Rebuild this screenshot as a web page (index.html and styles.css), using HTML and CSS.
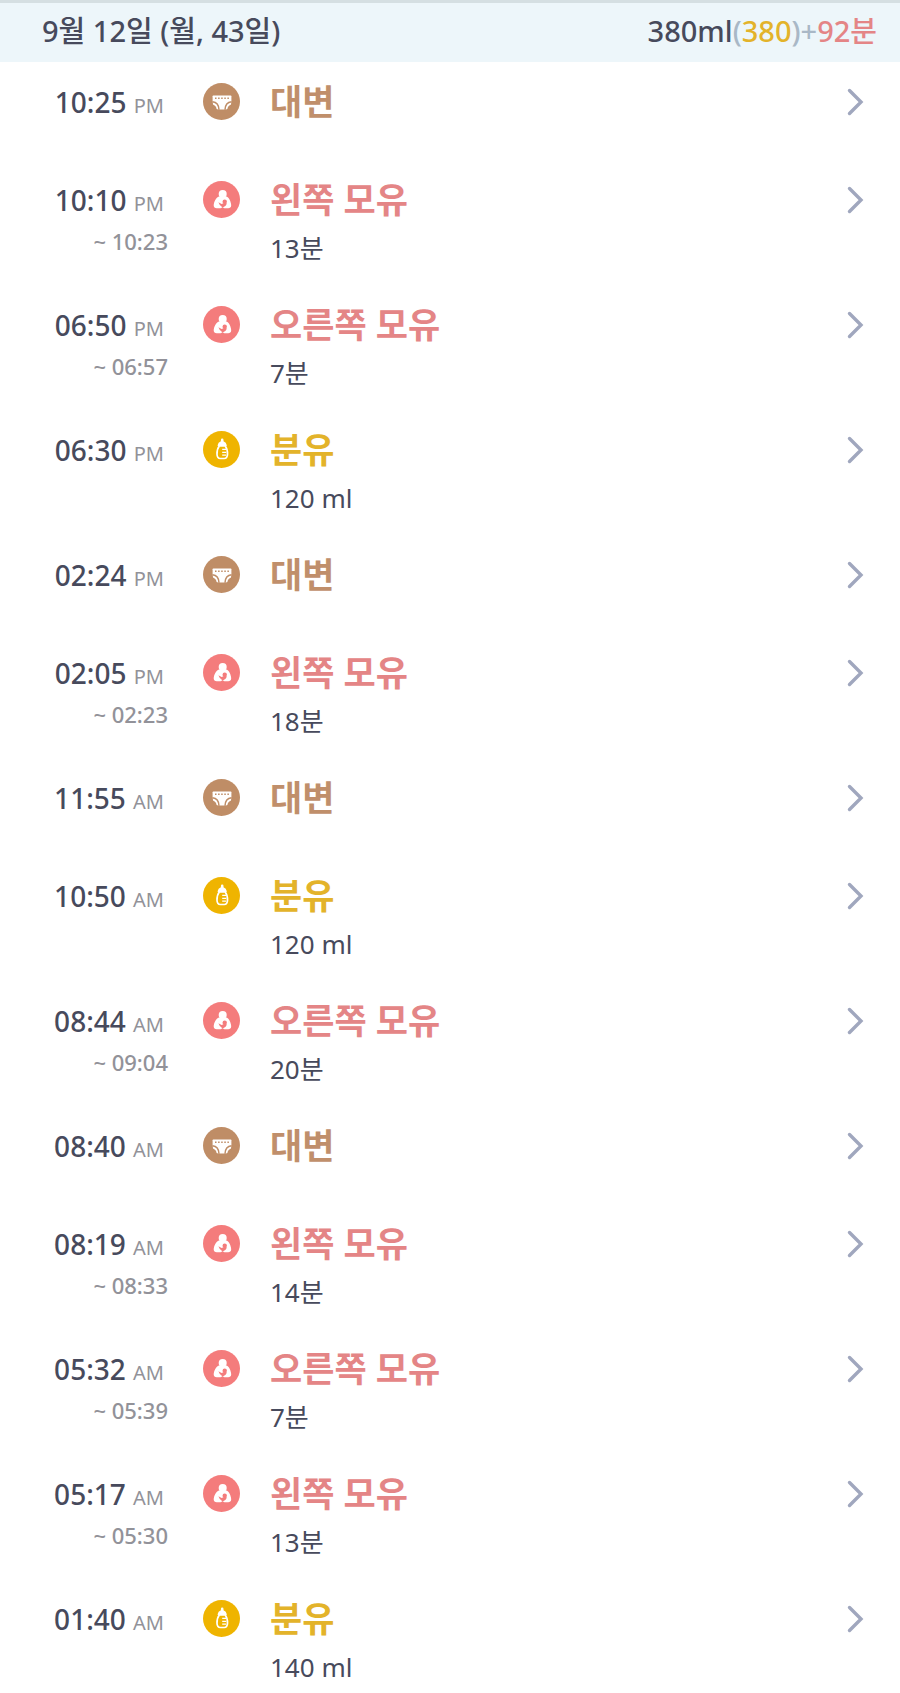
FILE: index.html
```html
<!DOCTYPE html>
<html lang="ko">
<head>
<meta charset="utf-8">
<meta name="viewport" content="width=device-width, initial-scale=1">
<title>9월 12일</title>
<link rel="stylesheet" href="styles.css">
</head>
<body>
<svg class="sprite" aria-hidden="true">
  <symbol id="diaper" viewBox="0 0 37 37">
    <circle cx="18.5" cy="18.5" r="18.5" fill="#bf8d66"/>
    <path d="M9.600 13.200q0-.7.7-.7h17.400q.7 0 .7.7v4.300q-.1 3-.8 5.500c-.8 2.400-3 3.500-5.600 3.500h-6c-2.600 0-4.800-1.100-5.600-3.500q-.7-2.500-.8-5.500z" fill="#fff"/>
    <path d="M9.500 18.700c4 .4 6.300 3.200 6.500 8M28.500 18.700c-4 .4-6.300 3.200-6.500 8" fill="none" stroke="#bf8d66" stroke-width="1.500"/>
    <path d="M9.500 22.500c1.800.4 3 2 3.300 4.500M28.500 22.500c-1.800.4-3 2-3.300 4.500" fill="none" stroke="#bf8d66" stroke-width="2"/>
    <path d="M12 15.200h14.500" stroke="#bf8d66" stroke-width="1.400" stroke-dasharray="1.500 1.600"/>
  </symbol>
  <symbol id="nursing" viewBox="0 0 37 37">
    <circle cx="18.500" cy="18.500" r="18.500" fill="#f47c7c"/>
    <circle cx="19.700" cy="13" r="4" fill="#fff"/>
    <path d="M16 15.500h7.500c2.600 1 4.600 5.400 4.700 8.800 0 2.200-1.400 3-3 3h-3.800l-1.900-1-1.900 1h-3.900c-1.800 0-3.100-.9-3-3 .2-3.500 2.400-7.800 5.300-8.800z" fill="#fff"/>
    <circle cx="21.700" cy="20.800" r="2.200" fill="#f47c7c"/>
    <path d="M15.400 21.200l3.200 1.700 2.600-.9 2.500.3c-.1 2-1.400 3-2.700 3.400l-1.500 1-1.200-1.400-1.500-1.400z" fill="#f47c7c"/>
  </symbol>
  <symbol id="bottle" viewBox="0 0 37 37">
    <circle cx="18.500" cy="18.500" r="18.500" fill="#efb400"/>
    <path d="M19.200 7.500q1.300 0 1.300 1.400v1.300q2.900 1.200 3.200 3.800v1h-9v-1q.3-2.600 3.200-3.800V8.900q0-1.400 1.300-1.400z" fill="#fff"/>
    <path d="M16.300 15h5.900c1.800 2.200 2.400 4.700 2.300 8.300-.1 3-1.300 4.200-3.300 4.200h-3.900c-2 0-3.200-1.200-3.300-4.200-.1-3.600.5-6.100 2.300-8.300z" fill="#efb400" stroke="#fff" stroke-width="1.700"/>
    <path d="M19.200 18.300h4M19.200 21.300h4M19.200 24.200h4" stroke="#fff" stroke-width="1.300"/>
  </symbol>
  <symbol id="chevron" viewBox="0 0 17 28">
    <path d="M2.500 2.500L14 14 2.500 25.500" fill="none" stroke="#a0a7be" stroke-width="3.400" stroke-linecap="round" stroke-linejoin="miter"/>
  </symbol>
</svg>

<header class="day">
  <h1 class="day-title">9월 12일 (월, 43일)</h1>
  <p class="day-total">380ml<span class="muted">(</span><span class="formula">380</span><span class="muted">)+</span><span class="breast">92분</span></p>
</header>

<main>
<ul class="log">
  <li><a class="entry" href="#e1"><span class="when"><span class="time">10:25 <small>PM</small></span></span><svg class="icon"><use href="#diaper"/></svg><span class="what"><strong class="stool">대변</strong></span><svg class="go"><use href="#chevron"/></svg></a></li>
  <li><a class="entry" href="#e2"><span class="when"><span class="time">10:10 <small>PM</small></span><span class="until">~ 10:23</span></span><svg class="icon"><use href="#nursing"/></svg><span class="what"><strong class="breast">왼쪽 모유</strong><span class="detail">13분</span></span><svg class="go"><use href="#chevron"/></svg></a></li>
  <li><a class="entry" href="#e3"><span class="when"><span class="time">06:50 <small>PM</small></span><span class="until">~ 06:57</span></span><svg class="icon"><use href="#nursing"/></svg><span class="what"><strong class="breast">오른쪽 모유</strong><span class="detail">7분</span></span><svg class="go"><use href="#chevron"/></svg></a></li>
  <li><a class="entry" href="#e4"><span class="when"><span class="time">06:30 <small>PM</small></span></span><svg class="icon"><use href="#bottle"/></svg><span class="what"><strong class="formula">분유</strong><span class="detail">120 ml</span></span><svg class="go"><use href="#chevron"/></svg></a></li>
  <li><a class="entry" href="#e5"><span class="when"><span class="time">02:24 <small>PM</small></span></span><svg class="icon"><use href="#diaper"/></svg><span class="what"><strong class="stool">대변</strong></span><svg class="go"><use href="#chevron"/></svg></a></li>
  <li><a class="entry" href="#e6"><span class="when"><span class="time">02:05 <small>PM</small></span><span class="until">~ 02:23</span></span><svg class="icon"><use href="#nursing"/></svg><span class="what"><strong class="breast">왼쪽 모유</strong><span class="detail">18분</span></span><svg class="go"><use href="#chevron"/></svg></a></li>
  <li><a class="entry" href="#e7"><span class="when"><span class="time">11:55 <small>AM</small></span></span><svg class="icon"><use href="#diaper"/></svg><span class="what"><strong class="stool">대변</strong></span><svg class="go"><use href="#chevron"/></svg></a></li>
  <li><a class="entry" href="#e8"><span class="when"><span class="time">10:50 <small>AM</small></span></span><svg class="icon"><use href="#bottle"/></svg><span class="what"><strong class="formula">분유</strong><span class="detail">120 ml</span></span><svg class="go"><use href="#chevron"/></svg></a></li>
  <li><a class="entry" href="#e9"><span class="when"><span class="time">08:44 <small>AM</small></span><span class="until">~ 09:04</span></span><svg class="icon"><use href="#nursing"/></svg><span class="what"><strong class="breast">오른쪽 모유</strong><span class="detail">20분</span></span><svg class="go"><use href="#chevron"/></svg></a></li>
  <li><a class="entry" href="#e10"><span class="when"><span class="time">08:40 <small>AM</small></span></span><svg class="icon"><use href="#diaper"/></svg><span class="what"><strong class="stool">대변</strong></span><svg class="go"><use href="#chevron"/></svg></a></li>
  <li><a class="entry" href="#e11"><span class="when"><span class="time">08:19 <small>AM</small></span><span class="until">~ 08:33</span></span><svg class="icon"><use href="#nursing"/></svg><span class="what"><strong class="breast">왼쪽 모유</strong><span class="detail">14분</span></span><svg class="go"><use href="#chevron"/></svg></a></li>
  <li><a class="entry" href="#e12"><span class="when"><span class="time">05:32 <small>AM</small></span><span class="until">~ 05:39</span></span><svg class="icon"><use href="#nursing"/></svg><span class="what"><strong class="breast">오른쪽 모유</strong><span class="detail">7분</span></span><svg class="go"><use href="#chevron"/></svg></a></li>
  <li><a class="entry" href="#e13"><span class="when"><span class="time">05:17 <small>AM</small></span><span class="until">~ 05:30</span></span><svg class="icon"><use href="#nursing"/></svg><span class="what"><strong class="breast">왼쪽 모유</strong><span class="detail">13분</span></span><svg class="go"><use href="#chevron"/></svg></a></li>
  <li><a class="entry" href="#e14"><span class="when"><span class="time">01:40 <small>AM</small></span></span><svg class="icon"><use href="#bottle"/></svg><span class="what"><strong class="formula">분유</strong><span class="detail">140 ml</span></span><svg class="go"><use href="#chevron"/></svg></a></li>
</ul>
</main>
</body>
</html>
```

FILE: styles.css
```css
* {
  box-sizing: border-box;
}

body {
  margin: 0;
  background: #fff;
  color: #474a5c;
  font-family: "Noto Sans", "Noto Sans CJK KR", sans-serif;
}

.sprite {
  display: none;
}

.day {
  display: flex;
  align-items: center;
  justify-content: space-between;
  padding: 8px 23px 11px 42px;
  border-top: 3px solid #d5dfe2;
  background: #edf6fa;
}

.day-title,
.day-total {
  margin: 0;
  font-size: 29px;
  font-weight: 500;
  line-height: 40px;
  white-space: nowrap;
}

.muted {
  color: #a9b8c6;
}

.formula {
  color: #e3b32a;
}

.breast {
  color: #e48586;
}

.stool {
  color: #c08f6b;
}

.log {
  margin: 0;
  padding: 1px 0 0;
  list-style: none;
}

.entry {
  display: grid;
  grid-template-columns: 168px 37px 1fr 17px;
  column-gap: 35px;
  align-items: start;
  padding: 19px 36px 20px 0;
  color: inherit;
  text-decoration: none;
}

.when {
  display: flex;
  flex-direction: column;
  gap: 1px;
  text-align: right;
  white-space: nowrap;
}

.time {
  padding-right: 4px;
  font-size: 28px;
  font-weight: 500;
  line-height: 40px;
}

.time small {
  color: #929299;
  font-size: 20px;
  font-weight: 400;
}

.until {
  color: #929299;
  font-size: 22px;
  font-weight: 500;
  line-height: 32px;
}

.icon {
  width: 37px;
  height: 37px;
  margin-top: 1px;
}

.what {
  display: flex;
  flex-direction: column;
  gap: 12px;
  margin-left: -5px;
}

.what strong {
  font-size: 35px;
  font-weight: 700;
  line-height: 40px;
}

.what strong:only-child {
  padding-bottom: 19px;
}

.detail {
  padding-bottom: 2px;
  font-size: 26px;
  font-weight: 400;
  line-height: 32px;
}

.go {
  width: 17px;
  height: 28px;
  margin-top: 6px;
}

.log li:last-child .entry {
  padding-bottom: 7px;
}
```
